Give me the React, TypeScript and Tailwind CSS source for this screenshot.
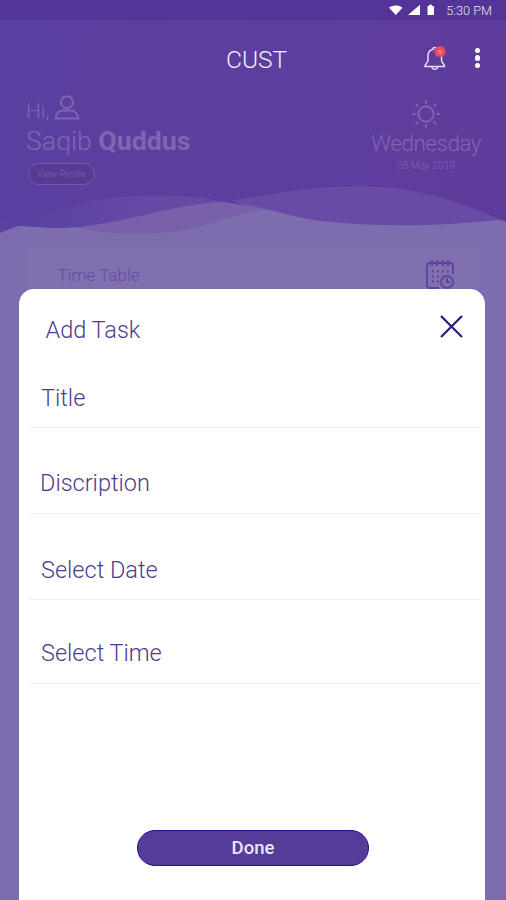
const fields = [
  { label: "Title", className: "h-[75px] pb-[14px] pl-[13px]" },
  { label: "Discription", className: "h-[86px] pb-[15px] pl-[12px]" },
  { label: "Select Date", className: "h-[86px] pb-[14px] pl-[13px]" },
  { label: "Select Time", className: "h-[84px] pb-[15px] pl-[13px]" },
];

function StatusBar() {
  return (
    <div className="flex h-5 items-center justify-end bg-[#543499] pr-[14px] text-white">
      <svg width="48" height="12" viewBox="0 0 48 12" fill="currentColor">
        <path d="M1 3.8C4.5 .8 11 .8 14.5 3.8L7.8 11z" />
        <path d="M20 11L32 .8V11z" />
        <path d="M39.5 2h1.5V.8h3V2H46v9h-6.5z" />
      </svg>
      <span className="mt-px ml-[10px] text-[12.7px] font-light text-[#e9e2f5]">5:30 PM</span>
    </div>
  );
}

function Waves() {
  return (
    <svg className="absolute inset-0" width="506" height="240" viewBox="0 0 506 240">
      <defs>
        <linearGradient id="header" x1="0" x2="1" y1="0" y2="0">
          <stop offset="0" stopColor="#5940a0" />
          <stop offset="1" stopColor="#5f3c9c" />
        </linearGradient>
        <linearGradient id="wave" gradientUnits="userSpaceOnUse" x1="40" x2="240" y1="0" y2="0">
          <stop offset="0" stopColor="#5c42a1" />
          <stop offset="0.55" stopColor="#644aa5" />
          <stop offset="1" stopColor="#684ba5" />
        </linearGradient>
      </defs>
      <path
        d="M70 225C100 236 155 236 190 229C215 223 235 214 268 209.5L225 200z"
        fill="#7861aa"
      />
      <path
        d="M0 20H506V219C440 227 375 227 320 221C280 215 248 202 225 202C180 202 110 228 60 228C40 228 25 226 18 226L0 233z"
        fill="url(#wave)"
      />
      <path
        d="M0 0H506V222C470 206 420 186 360 186C305 187 265 195 232 200.5L246 206L225 202C190 194 130 193 85 202C50 211 35 219 20 226L0 220z"
        fill="url(#header)"
      />
    </svg>
  );
}

function Header() {
  return (
    <header className="relative h-[220px]">
      <Waves />
      <div className="relative">
        <StatusBar />
        <div className="flex h-[78px] items-center pl-[226px] text-white">
          <h1 className="mt-[2px] text-[24.5px] leading-none font-light text-[#f2edfa]">CUST</h1>
          <div className="-mt-[2px] ml-auto flex items-center pr-[26px]">
            <svg width="24" height="26" viewBox="0 0 24 26" fill="none" stroke="#e6def3" strokeWidth="1.5">
              <path d="M2 21.5H21.5C22 19 18.5 18.5 18.5 15V11C18.5 6.5 15.5 4.8 13.5 4.3C13.5 2 10 2 10 4.3C7 5 5 7.5 5 11V15C5 18.5 1.5 19 2 21.5z" />
              <path d="M9 22C9.5 25 14 25 14.5 22" />
              <circle cx="17" cy="6.5" r="5.6" fill="#ee4861" stroke="none" />
              <text x="15.3" y="8.7" fontSize="6" fill="#ffc4cc" stroke="none">5</text>
            </svg>
            <div className="ml-[28px] flex flex-col gap-[2px]">
              <i className="size-[5.5px] rounded-full bg-white" />
              <i className="size-[5.5px] rounded-full bg-white" />
              <i className="size-[5.5px] rounded-full bg-white" />
            </div>
          </div>
        </div>
        <div className="flex justify-between pr-[25px] pl-[26px] text-[#8065b2]">
          <div className="-mt-[5px]">
            <div className="flex h-[32px] items-end text-[21px] leading-[28px] font-light">
              Hi,
              <svg className="mb-[5px] ml-[4px]" width="26" height="25" viewBox="0 0 26 25" fill="none" stroke="currentColor" strokeWidth="1.9">
                <circle cx="13" cy="7.2" r="6" />
                <path d="M1.5 23.5C2 18 6 15.5 8.5 15.5H17.5C21 15.5 24 19 24.5 23.5z" />
              </svg>
            </div>
            <p className="text-[26.7px] leading-[32px] font-light">
              Saqib <b className="font-bold">Quddus</b>
            </p>
            <button className="mt-[6px] ml-[2px] h-[22px] w-[67px] rounded-full border border-[#7459ab] bg-[#563a94] text-[9.5px] font-light">
              View Profile
            </button>
          </div>
          <div className="flex flex-col items-center">
            <svg className="mt-[2px]" width="28" height="28" viewBox="0 0 28 28" fill="none" stroke="currentColor" strokeWidth="1.9" strokeLinecap="round">
              <circle cx="14" cy="14" r="7.7" />
              <path d="M14 1V3M14 25V27M1 14H3M25 14H27M4.5 4.5L6 6M22 22L23.5 23.5M4.5 23.5L6 22M22 6L23.5 4.5" />
            </svg>
            <p className="text-[22.5px] leading-[31px] font-light tracking-[-0.5px]">Wednesday</p>
            <p className="text-[10.2px] leading-[13px] font-light">08 May 2019</p>
          </div>
        </div>
      </div>
    </header>
  );
}

function CalendarIcon() {
  return (
    <svg width="30" height="30" viewBox="0 0 30 30" fill="none" stroke="#5e439e" strokeWidth="1.8">
      <path d="M14 28H5Q2 28 2 25V6Q2 3 5 3H25Q28 3 28 6V14" />
      <path d="M7 .5V6M12 .5V6M18 .5V6M23 .5V6" strokeWidth="2.4" />
      <path d="M7 11.5H25M7 16.5H18M7 21.5H15" strokeDasharray="2 3" />
      <circle cx="22" cy="22" r="6" />
      <path d="M22 18V22H25" />
    </svg>
  );
}

function AddTask() {
  return (
    <section className="relative -mt-px ml-[18.5px] flex w-[466.5px] flex-1 flex-col rounded-t-[15px] bg-white text-[#4d3d90]">
      <div className="flex h-[64px] items-center pt-[16px] pr-[21px] pl-[27px]">
        <h2 className="mt-px text-[23.5px] leading-[28px] font-light">Add Task</h2>
        <svg className="-mt-[6px] ml-auto" width="25" height="25" viewBox="0 0 25 25" stroke="#2d1682" strokeWidth="2.2">
          <path d="M2 2L23 23M23 2L2 23" />
        </svg>
      </div>
      <div className="mr-[5px] ml-[9.5px]">
        {fields.map((field) => (
          <div
            key={field.label}
            className={`flex items-end border-b border-[#f0f0f3] text-[23.5px] leading-[29px] font-light ${field.className}`}
          >
            {field.label}
          </div>
        ))}
      </div>
      <button className="mt-auto mb-[34px] ml-[118.5px] h-[36px] w-[232px] rounded-full border border-[#291085] bg-[#543c98] pt-px text-[18.5px] font-medium text-[#ece6f8]">
        Done
      </button>
    </section>
  );
}

export default function App() {
  return (
    <div className="flex h-[900px] w-full flex-col overflow-hidden bg-[#7d6dae] font-['Roboto','Liberation_Sans',sans-serif]">
      <Header />
      <div className="mx-auto mt-[27px] flex h-[43px] w-[453px] items-center justify-between bg-[#8070af] pr-[25px] pl-[31px]">
        <span className="mt-[14px] text-[17px] font-light text-[#664ba2]">Time Table</span>
        <div className="mt-[12px]">
          <CalendarIcon />
        </div>
      </div>
      <AddTask />
    </div>
  );
}
